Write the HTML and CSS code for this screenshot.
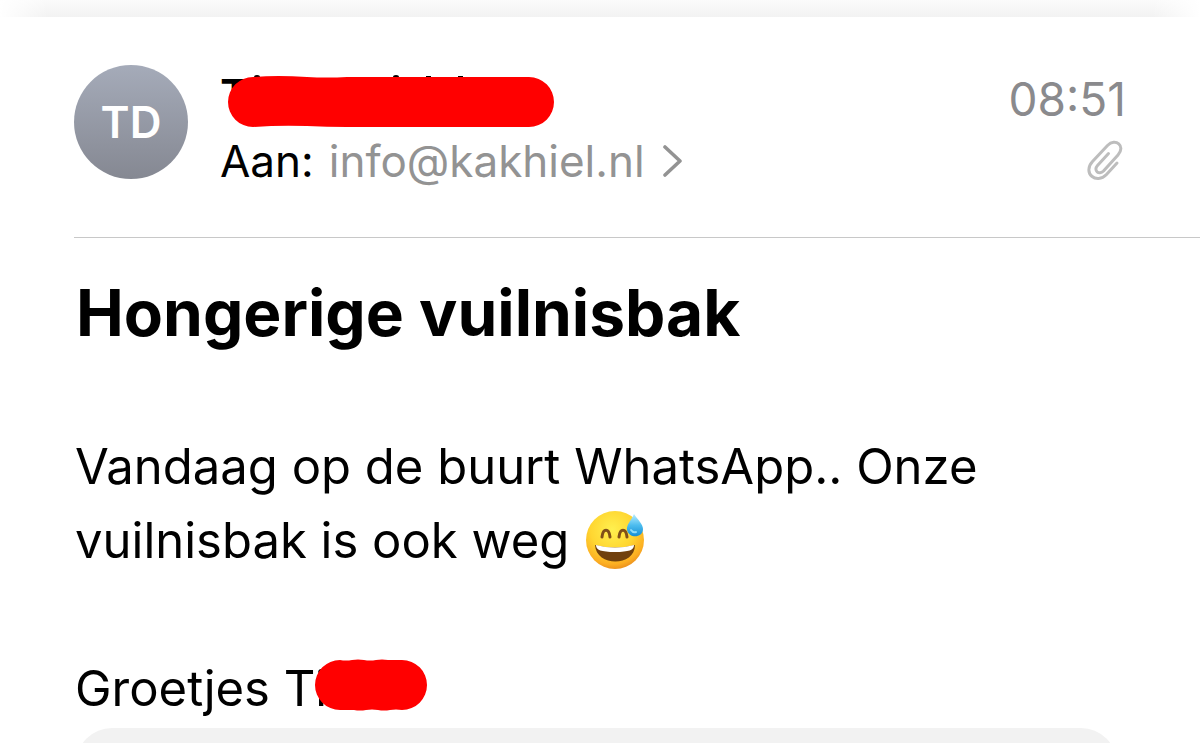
FILE: index.html
```html
<!DOCTYPE html>
<html lang="nl">
<head>
<meta charset="utf-8">
<meta name="viewport" content="width=device-width, initial-scale=1">
<title>Hongerige vuilnisbak</title>
<link rel="stylesheet" href="styles.css">
</head>
<body>
<div class="toolbar-edge"></div>
<main class="mail">
  <header class="mail-header">
    <div class="avatar">TD</div>
    <div class="people">
      <div class="sender">Ti
        <svg class="redaction redaction-name" viewBox="0 0 328 54" aria-hidden="true">
          <path d="M27 3a3 2 0 0 1 6 0v2h-6zM166 3a3 2 0 0 1 6 0v2h-6zM199 2h5v3h-5zM231 2h5v3h-5z" fill="#000"/>
          <path d="M26 3Q50 1 80 3Q100 4 120 3L302 3A25 25 0 0 1 302 53L120 53Q100 53 80 52Q52 51 26 53A25 25 0 0 1 26 3Z" fill="#f00"/>
        </svg>
      </div>
      <div class="recipient">
        <span>Aan:</span>
        <a class="address" href="mailto:info@kakhiel.nl">info@kakhiel.nl</a>
        <svg class="chevron" viewBox="0 0 20 34" aria-hidden="true"><path d="M2 3L17 17L2 31" fill="none" stroke="#939393" stroke-width="3.6" stroke-linecap="round" stroke-linejoin="round"/></svg>
      </div>
    </div>
    <div class="meta">
      <time datetime="08:51">08:51</time>
      <svg class="clip" viewBox="0 0 38 42" role="img" aria-label="Bijlage"><path d="M22.5 13.5L11.5 25.5C7 30.5 13 35.5 17.5 31L32 15C40 6 29.500 -2.500 21.500 5.500L6.500 21.500C-4 33 10.500 45 20.500 34.500L31 23" fill="none" stroke="#bdbdbd" stroke-width="3" stroke-linecap="round" stroke-linejoin="round"/></svg>
    </div>
  </header>
  <article class="mail-body">
    <h1>Hongerige vuilnisbak</h1>
    <p>Vandaag op de buurt WhatsApp.. Onze<br>vuilnisbak is ook weg
      <svg class="emoji" viewBox="0 0 60 60" role="img" aria-label="Lachend gezicht met zweetdruppel">
        <defs>
          <radialGradient id="face" cx="0.45" cy="0.32" r="0.68"><stop offset="0" stop-color="#fff04f"/><stop offset="0.55" stop-color="#ffd631"/><stop offset="0.88" stop-color="#fcae22"/><stop offset="1" stop-color="#ed941f"/></radialGradient>
          <linearGradient id="drop" x1="0" y1="0" x2="0" y2="1"><stop offset="0" stop-color="#b9edff"/><stop offset="0.5" stop-color="#4dbdef"/><stop offset="1" stop-color="#168ed4"/></linearGradient>
        </defs>
        <circle cx="30" cy="30" r="29" fill="url(#face)"/>
        <path d="M17 27C18 18 24 18 25 27M34 27C35 18 41 18 42 27" fill="none" stroke="#805018" stroke-width="3" stroke-linecap="round"/>
        <path d="M10 35Q30 40 50 35C50 57 11 57 10 35Z" fill="#70400d"/>
        <path d="M11 35Q30 40 49 35C49 40 44 42 30 42S11 40 11 35Z" fill="#fff"/>
        <path d="M49 4C46 11 41 15 42 20C44 29 58 28 58 19C58 14 53 10 49 4Z" fill="url(#drop)"/>
        <path d="M46 20Q48 23 51 22" fill="none" stroke="#8fdcf8" stroke-width="2" stroke-linecap="round"/>
      </svg>
    </p>
    <p class="signature">Groetjes <span class="signer">Ti
      <svg class="redaction redaction-signer" viewBox="0 0 114 52" aria-hidden="true"><path d="M26 1Q32 2 38 1T50 1T62 1T74 1H88A25 25 0 0 1 88 51Q82 50 76 51T64 51T52 51T40 51H26A25 25 0 0 1 26 1Z" fill="#f00"/></svg></span></p>
    <div class="attachment"></div>
  </article>
</main>
</body>
</html>
```
FILE: styles.css
```css
* { box-sizing: border-box; }
html { height: 100%; }
body {
  margin: 0;
  height: 100%;
  display: flex;
  flex-direction: column;
  overflow: hidden;
  background: #fff;
  color: #000;
  font-family: Inter, "Liberation Sans", sans-serif;
}
.toolbar-edge {
  flex: none;
  height: 17px;
  background: linear-gradient(90deg, #fff, transparent 48px, transparent calc(100% - 48px), #fff), linear-gradient(#fbfbfb, #f2f2f2);
}
.mail {
  flex: 1;
  min-height: 0;
  padding-left: 74px;
  overflow: hidden;
}
.mail-header {
  display: flex;
  align-items: flex-start;
  padding: 48px 74px 46px 0;
  border-bottom: 1px solid #c8c8c8;
}
.avatar {
  flex: none;
  display: flex;
  align-items: center;
  justify-content: center;
  width: 114px;
  height: 114px;
  border-radius: 50%;
  background: linear-gradient(#a5abb9, #858892);
  color: #fff;
  font-size: 44px;
  font-weight: 600;
}
.people { flex: 1; margin-left: 32px; }
.sender {
  position: relative;
  height: 66px;
  font-size: 44px;
  line-height: 60px;
  font-weight: 600;
}
.redaction { position: absolute; overflow: visible; }
.redaction-name { left: 7px; top: 9px; width: 328px; height: 54px; }
.recipient {
  display: flex;
  align-items: center;
  height: 60px;
  font-size: 44px;
  line-height: 60px;
}
.address { margin-left: 15px; color: #939393; text-decoration: none; }
.chevron { width: 20px; height: 34px; margin-left: 18px; }
.meta {
  display: flex;
  flex-direction: column;
  align-items: flex-end;
  gap: 6px;
  color: #8a8a8d;
  font-size: 46px;
  line-height: 69px;
}
.clip { width: 38px; height: 42px; margin-right: 2px; }
.mail-body { padding-right: 83px; }
h1 {
  margin: 35px 0 0 2px;
  font-size: 64px;
  line-height: 80px;
  font-weight: 700;
}
p {
  margin: 77px 0 0 1px;
  font-size: 49px;
  line-height: 74px;
}
.emoji { width: 60px; height: 60px; margin-left: 2px; vertical-align: -12px; }
.signature { margin-top: 74px; }
.signer { position: relative; }
.redaction-signer { left: 30px; top: 0; width: 114px; height: 52px; }
.attachment {
  height: 120px;
  margin: 2px 0 0 2px;
  border-radius: 36px;
  background: #f2f2f2;
}
```
